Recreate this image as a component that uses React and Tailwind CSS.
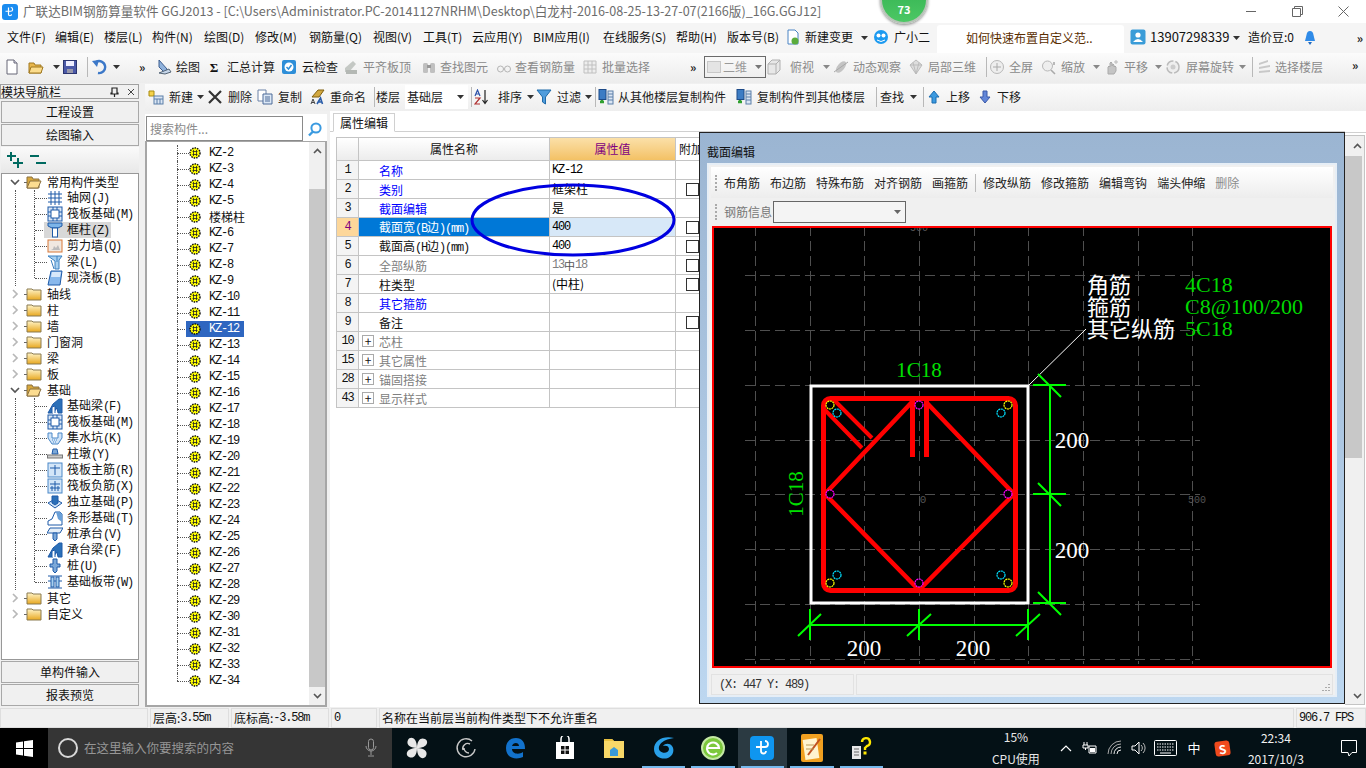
import React from "react";

const MONO = "font-['Liberation_Mono','Noto_Sans_CJK_SC',monospace] tracking-[-1.2px]";

const S = ({ children, c = "w-4 h-4 shrink-0", v = "0 0 16 16" }) => (
  <svg className={c} viewBox={v}>{children}</svg>
);
const Caret = ({ c = "#333" }) => (
  <svg className="w-[7px] h-[4px]" viewBox="0 0 7 4"><polygon points="0,0 7,0 3.5,4" fill={c} /></svg>
);
const CaretBox = ({ w, c }) => <div className={`${w} flex justify-center items-center shrink-0`}><Caret c={c} /></div>;
const More = () => <span className="text-[12px] font-bold leading-none -mt-1 text-[#222]">»</span>;
const Sep = ({ w }) => <div className={`${w} h-[20px] flex justify-center shrink-0`}><div className="w-px h-full bg-[#b8b8b8]" /></div>;

/* toolbar icons */
const IDoc = () => <S><path d="M3 1h7l3 3v11H3z" fill="#fff" stroke="#667" /><path d="M10 1v3h3" fill="#dde" stroke="#667" /></S>;
const IOpen = () => <S><path d="M1 4h5l1 2h6v8H1z" fill="#e8b64c" stroke="#a07820" /><path d="M3 8h12l-2 6H1z" fill="#fbdc8c" stroke="#a07820" /></S>;
const ISave = () => <S><rect x="1.5" y="1.5" width="13" height="13" fill="#4b59a8" stroke="#2b3570" /><rect x="4" y="2" width="8" height="5" fill="#eef" /><rect x="5" y="10" width="6" height="4" fill="#99a" /></S>;
const IUndo = () => <S><path d="M5 3 A6 6 0 1 1 7 14" fill="none" stroke="#3c78c8" strokeWidth="2.4" /><polygon points="1,2 8,1 6,8" fill="#3c78c8" /></S>;
const IDraw = () => <S><path d="M3 1l8 9-2 4-6-6z" fill="#8fb2dc" stroke="#3e5e90" /><path d="M3 14l10-4 2 3-6 2z" fill="#c6d6ea" stroke="#567" /></S>;
const ISum = () => <span className="w-4 text-center font-bold text-[13px] leading-none text-[#111] font-['Liberation_Serif',serif] shrink-0">Σ</span>;
const ICloud = () => <S><rect x="1" y="1" width="14" height="14" rx="2" fill="#2d8ed8" /><circle cx="8" cy="8" r="4.5" fill="#fff" /><path d="M5.5 8l2 2 3-4" fill="none" stroke="#2d8ed8" strokeWidth="1.5" /></S>;
const IGrayA = () => <S><path d="M2 9l8-7 3 3-7 8H2z" fill="#c4c8c4" /><rect x="3" y="11" width="11" height="4" fill="#b4b8b4" /></S>;
const IBinoc = () => <S><rect x="2" y="4" width="5" height="10" rx="1.5" fill="#c0c0c0" /><rect x="9" y="4" width="5" height="10" rx="1.5" fill="#c0c0c0" /><rect x="6" y="6" width="4" height="3" fill="#999" /></S>;
const IGlass = () => <S><circle cx="4.5" cy="10" r="3" fill="none" stroke="#b4b4b4" /><circle cx="11.5" cy="10" r="3" fill="none" stroke="#b4b4b4" /><path d="M7.5 10h1" stroke="#b4b4b4" /></S>;
const IBatch = () => <S><path d="M2 2h12v12H2z" fill="#eee" stroke="#c0c0c0" /><path d="M2 6h12M2 10h12M6 2v12M10 2v12" stroke="#c0c0c0" /></S>;
const ICube = () => <S><path d="M2 5l4-4h8v10l-4 4H2z" fill="#e8e8e8" stroke="#b0b0b0" /><path d="M2 5h8v10M10 5l4-4" fill="none" stroke="#b0b0b0" /></S>;
const IOrbit = () => <S><ellipse cx="8" cy="8" rx="3.5" ry="7" transform="rotate(40 8 8)" fill="#c4c4c4" /><path d="M1 13L15 3" stroke="#a8a8a8" /></S>;
const ILocal = () => <S><path d="M8 1l6 5-6 9-6-9z" fill="#ddd" stroke="#bbb" /><path d="M2 6h12M5 3.5l3 11.5M11 3.5L8 15" stroke="#bbb" fill="none" /></S>;
const IZoomFull = () => <S><circle cx="8" cy="8" r="6.5" fill="#eee" stroke="#b8b8b8" /><path d="M8 4v8M4 8h8" stroke="#aaa" /></S>;
const IZoom = () => <S><circle cx="6.5" cy="7" r="5" fill="#eee" stroke="#b8b8b8" /><path d="M10 11l4 4M13 3v3" stroke="#aaa" strokeWidth="1.6" /></S>;
const IPan = () => <S><path d="M4 15V8l1-1 1 1V4l1-1 1 1v3l1-2 1 1v2l1-1 1 1v4l-2 3z" fill="#c4c4c4" stroke="#aaa" /><path d="M12 1v4M10 3h4" stroke="#bbb" /></S>;
const IRotate = () => <S><circle cx="8" cy="8" r="6" fill="#eee" stroke="#bbb" strokeWidth="1.5" strokeDasharray="8 2" /><circle cx="8" cy="8" r="2.5" fill="#ccc" /></S>;
const ILayer = () => <S><path d="M3 4l9-3v2L3 6zM3 8l11-2v2L3 10zM3 12l11-1v2l-11 1z" fill="#c8c8c8" /></S>;
const INew = () => <S><path d="M1 2h5v5H1z" fill="#f5d24a" stroke="#a88b10" /><rect x="6" y="7" width="9" height="8" fill="#dbe6f4" stroke="#5b7fa8" /><path d="M6 10h9M9 10v5M12 10v5" stroke="#5b7fa8" /></S>;
const IX = () => <S><path d="M2 2l12 12M14 2L2 14" stroke="#333" strokeWidth="2.2" /></S>;
const ICopy = () => <S><path d="M1 1h8v11H1z" fill="#fff" stroke="#6a82a8" /><path d="M6 5h9v10H6z" fill="#dce8f6" stroke="#4c6a98" /><path d="M8 8h5M8 10h5M8 12h5" stroke="#4c6a98" /></S>;
const IRename = () => <S><path d="M2 8l6-7h6l-5 7z" fill="#d2a840" stroke="#806010" /><path d="M1 15l2-5 2 5M2 13.5h2" fill="none" stroke="#444" /><path d="M7 15l3.5-6 2 6M8.5 13h3.5" fill="none" stroke="#2a5ca8" strokeWidth="1.6" /></S>;
const ISort = () => <S><path d="M1 7l2.5-6L6 7M2 5h3" fill="none" stroke="#2b50a8" strokeWidth="1.2" /><path d="M1 9h5L1 15h5" fill="none" stroke="#b03030" strokeWidth="1.2" /><path d="M11 1v13M8.5 11l2.5 3.5L13.5 11" fill="none" stroke="#222" strokeWidth="1.2" /></S>;
const IFilter = () => <S><path d="M1 1h14L9.5 8v7l-3-2V8z" fill="#4f9cdc" stroke="#1f6aa8" /></S>;
const ICopyFrom = () => <S><rect x="1" y="0.5" width="7" height="10" fill="#3c7cc4" stroke="#1d4a88" /><rect x="10" y="2" width="5" height="13" fill="#dbe6f4" stroke="#5b7fa8" /><path d="M10 5h5M10 8h5M10 11h5" stroke="#5b7fa8" /><path d="M4 11v3M2 13h4" stroke="#30a030" strokeWidth="2.4" /></S>;
const IUp = () => <S><path d="M8 2l5 6h-3v6H6V8H3z" fill="#3c9ae0" stroke="#1b6cb0" /></S>;
const IDown = () => <S><path d="M8 14l5-6h-3V2H6v6H3z" fill="#6286d8" stroke="#3a58a8" /></S>;

const Tool = ({ w, icon, label, muted, gap = "gap-1" }) => (
  <div className={`${w} flex items-center ${gap} shrink-0 whitespace-nowrap ${muted ? "text-[#8a8a8a]" : "text-[#1a1a1a]"}`}>
    {icon}<span>{label}</span>
  </div>
);

function TitleBar() {
  return (
    <div className="h-[23px] bg-white flex items-center shrink-0 relative">
      <div className="ml-[2px] w-4 h-4 rounded-[3px] bg-[#1a8cf0] flex items-center justify-center shrink-0">
        <S c="w-3 h-3"><path d="M6 2v9a2 2 0 0 0 4 0M2 7h7a2.5 2.5 0 0 0 0-5" fill="none" stroke="#fff" strokeWidth="1.6" /></S>
      </div>
      <span className="ml-[5px] text-[#6c6c6c] text-[12.6px] whitespace-nowrap">{"广联达BIM钢筋算量软件 GGJ2013 - [C:\\Users\\Administrator.PC-20141127NRHM\\Desktop\\白龙村-2016-08-25-13-27-07(2166版)_16G.GGJ12]"}</span>
      <div className="ml-auto flex items-center">
        <div className="w-[46px] flex justify-center"><div className="w-[10px] h-px bg-[#666]" /></div>
        <div className="w-[46px] flex justify-center"><S c="w-[11px] h-[11px]" v="0 0 11 11"><path d="M0.5 2.5h8v8h-8zM2.5 2.5v-2h8v8h-2" fill="none" stroke="#666" /></S></div>
        <div className="w-[46px] flex justify-center"><S c="w-[11px] h-[11px]" v="0 0 11 11"><path d="M0.5 0.5l10 10M10.5 0.5l-10 10" stroke="#666" /></S></div>
      </div>
    </div>
  );
}

function MenuBar() {
  const items = [
    ["文件(F)", "w-[48px]"], ["编辑(E)", "w-[49px]"], ["楼层(L)", "w-[48px]"], ["构件(N)", "w-[52px]"], ["绘图(D)", "w-[51px]"],
    ["修改(M)", "w-[54px]"], ["钢筋量(Q)", "w-[64px]"], ["视图(V)", "w-[50px]"], ["工具(T)", "w-[49px]"], ["云应用(Y)", "w-[61px]"],
    ["BIM应用(I)", "w-[70px]"], ["在线服务(S)", "w-[73px]"], ["帮助(H)", "w-[51px]"], ["版本号(B)", "w-[59px]"],
  ];
  return (
    <div className="h-[30px] bg-[#f5f5f5] flex items-center pl-[7px] text-[12px] text-[#111] shrink-0 relative">
      {items.map(([t, w]) => <div key={t} className={`${w} whitespace-nowrap shrink-0 pb-[2px]`}>{t}</div>)}
      <div className="w-[72px] flex items-center gap-[4px] shrink-0 whitespace-nowrap -ml-[1px] pb-[2px]">
        <S><path d="M3 1h7l3 3v11H3z" fill="#fff" stroke="#4a84c4" /><circle cx="10" cy="12" r="3.5" fill="#5aac3c" /></S>新建变更
      </div>
      <CaretBox w="w-[14px]" />
      <div className="w-[64px] ml-[2px] flex items-center gap-[5px] shrink-0 whitespace-nowrap pb-[2px]">
        <S><circle cx="8" cy="8" r="7" fill="#1c9af0" /><circle cx="5.5" cy="6.5" r="2" fill="#fff" /><circle cx="10.5" cy="6.5" r="2" fill="#fff" /><path d="M4 11q4 3 8 0" fill="none" stroke="#fff" /></S>广小二
      </div>
      <div className="w-[187px] self-stretch mt-[2px] bg-white rounded-t-[3px] flex items-center pl-[29px] text-[#5a2e00] whitespace-nowrap shrink-0 pb-[3px]">如何快速布置自定义范..</div>
      <div className="w-[6px] shrink-0" />
      <div className="w-[101px] flex items-center gap-[4px] shrink-0 whitespace-nowrap pb-[2px]">
        <S><rect x="0.5" y="0.5" width="15" height="15" rx="2" fill="#3a9cd8" /><circle cx="8" cy="6" r="2.6" fill="#fff" /><path d="M3 13q5-6 10 0z" fill="#fff" /></S><span className="text-[13px]">13907298339</span>
      </div>
      <CaretBox w="w-[10px]" />
      <div className="w-[54px] shrink-0 ml-[7px] whitespace-nowrap pb-[2px]">造价豆:0</div>
      <S><path d="M8 1q3 0 3.5 4l1.5 6H3l1.5-6Q5 1 8 1z" fill="#2f8be8" /><path d="M6 12h4l-2 3z" fill="#1f6ac0" /></S>
      <div className="ml-auto mr-[3px]"><More /></div>
    </div>
  );
}

function Toolbar1() {
  return (
    <div className="h-[30px] pb-[2px] bg-gradient-to-b from-[#fbfbfb] to-[#ececec] flex items-center pl-[4px] text-[12px] shrink-0">
      <div className="w-[24px] shrink-0"><IDoc /></div>
      <div className="w-[21px] shrink-0"><IOpen /></div>
      <CaretBox w="w-[14px]" />
      <div className="w-[22px] shrink-0 ml-[-1px]"><ISave /></div>
      <Sep w="w-[7px]" />
      <div className="w-[21px] shrink-0"><IUndo /></div>
      <CaretBox w="w-[8px]" />
      <div className="w-[17px] shrink-0" />
      <div className="w-[19px] pl-[2px] shrink-0"><More /></div>
      <Tool w="w-[50px]" icon={<IDraw />} label="绘图" />
      <Tool w="w-[75px]" icon={<ISum />} label="汇总计算" gap="gap-[5px]" />
      <Tool w="w-[62px]" icon={<ICloud />} label="云检查" gap="gap-[5px]" />
      <Tool w="w-[78px]" icon={<IGrayA />} label="平齐板顶" muted />
      <Tool w="w-[75px]" icon={<IBinoc />} label="查找图元" muted gap="gap-[3px]" />
      <Tool w="w-[86px]" icon={<IGlass />} label="查看钢筋量" muted gap="gap-[3px]" />
      <Tool w="w-[105px]" icon={<IBatch />} label="批量选择" muted />
      <div className="w-[17px] pl-[3px] shrink-0"><More /></div>
      <div className="w-[62px] h-[22px] border border-[#6a6a6a] flex items-center pl-[2px] gap-[2px] text-[#999] shrink-0">
        <div className="w-[14px] h-[12px] bg-[#e4e4e4] border border-[#c8c8c8]" />二维
        <div className="ml-auto mr-[3px]"><Caret c="#777" /></div>
      </div>
      <Tool w="w-[53px]" icon={<ICube />} label="俯视" muted gap="gap-[8px]" />
      <CaretBox w="w-[14px]" c="#888" />
      <Tool w="w-[75px]" icon={<IOrbit />} label="动态观察" muted />
      <Tool w="w-[75px]" icon={<ILocal />} label="局部三维" muted />
      <Sep w="w-[6px]" />
      <Tool w="w-[52px]" icon={<IZoomFull />} label="全屏" muted />
      <Tool w="w-[48px]" icon={<IZoom />} label="缩放" muted />
      <CaretBox w="w-[15px]" c="#888" />
      <Tool w="w-[48px]" icon={<IPan />} label="平移" muted />
      <CaretBox w="w-[13px]" c="#888" />
      <Tool w="w-[71px]" icon={<IRotate />} label="屏幕旋转" muted gap="gap-[5px]" />
      <CaretBox w="w-[12px]" c="#888" />
      <Sep w="w-[8px]" />
      <Tool w="w-[96px]" icon={<ILayer />} label="选择楼层" muted gap="gap-[3px]" />
      <More />
    </div>
  );
}

function Toolbar2() {
  return (
    <div className="h-[27px] pb-[2px] mt-[1px] bg-gradient-to-b from-[#fbfbfb] to-[#eeeeee] flex items-center pl-[3px] text-[12px] shrink-0">
      <Tool w="w-[46px]" icon={<INew />} label="新建" gap="gap-[5px]" />
      <CaretBox w="w-[13px]" />
      <Tool w="w-[50px]" icon={<IX />} label="删除" gap="gap-[5px]" />
      <Tool w="w-[53px]" icon={<ICopy />} label="复制" gap="gap-[5px]" />
      <Tool w="w-[63px]" icon={<IRename />} label="重命名" />
      <Sep w="w-[3px]" />
      <div className="w-[29px] text-[#1a1a1a] shrink-0">楼层</div>
      <div className="w-[63px] h-[24px] bg-white flex items-center pl-[2px] text-[#1a1a1a] shrink-0">基础层<div className="ml-auto mr-[4px]"><Caret /></div></div>
      <Sep w="w-[6px]" />
      <Tool w="w-[50px]" icon={<ISort />} label="排序" gap="gap-[8px]" />
      <CaretBox w="w-[12px]" />
      <Tool w="w-[48px]" icon={<IFilter />} label="过滤" gap="gap-[5px]" />
      <CaretBox w="w-[9px]" />
      <Sep w="w-[5px]" />
      <Tool w="w-[138px]" icon={<ICopyFrom />} label="从其他楼层复制构件" />
      <Tool w="w-[137px]" icon={<ICopyFrom />} label="复制构件到其他楼层" gap="gap-[5px]" />
      <Sep w="w-[7px]" />
      <div className="w-[26px] text-[#1a1a1a] shrink-0">查找</div>
      <CaretBox w="w-[14px]" />
      <Sep w="w-[6px]" />
      <Tool w="w-[51px]" icon={<IUp />} label="上移" />
      <Tool w="w-[51px]" icon={<IDown />} label="下移" />
    </div>
  );
}

const NavBtn = ({ children }) => (
  <div className="h-[22px] mb-[1px] bg-[#f0f0f0] border border-[#a8a8a8] flex items-center justify-center text-[12px] text-[#111] shrink-0">{children}</div>
);

const FolderIcon = ({ open }) => open ? (
  <S><path d="M1 3h5l1 2h6v9H1z" fill="#d8a83c" stroke="#8a7040" /><path d="M4 7h11l-3 7H1z" fill="#fcdc90" stroke="#8a7040" /></S>
) : (
  <S><path d="M1 3h5l1 1h8v10H1z" fill="url(#fold)" stroke="#8a7a50" /></S>
);

/* component tree icons */
const B = "#1e5aa8";
const IGrid = () => <S><path d="M1 4h14M1 8h14M1 12h14M4 1v14M8 1v14M12 1v14" stroke={B} /></S>;
const IRaft = () => <S><rect x="1" y="1" width="14" height="14" fill="#dce8f6" stroke={B} /><rect x="4" y="4" width="8" height="8" fill="#fff" stroke={B} /><path d="M1 6h3M1 10h3M12 6h3M12 10h3M6 1v3M10 1v3M6 12v3M10 12v3" stroke={B} /></S>;
const IColumn = () => <S><path d="M1 1h14v3l-4 2H5L1 4z" fill="#7db4e8" stroke={B} /><rect x="5.5" y="6" width="5" height="9" fill="#fff" stroke={B} /></S>;
const IWall = () => <S><rect x="1" y="2" width="14" height="12" fill="#f0e8e0" stroke="#d87838" /><path d="M6 11l1-3 2 2 2-3 2 5H4z" fill="#bbb" /></S>;
const IBeam = () => <S><path d="M1 2h14l-3 4v9H8V7z" fill="#a8d0f0" stroke="#3a80c0" /><path d="M4 6l3 9M10 2v6" stroke="#3a80c0" /></S>;
const ISlab = () => <S><path d="M4 1h11l-2 14H1z" fill="#88b8ec" stroke={B} /><path d="M5 2h9l-1 5H4z" fill="#d8e8fa" /></S>;
const IFBeam = () => <S><path d="M1 15l5-9 6-5h3v14h-4l-1-5-4 5z" fill="#2c70b8" stroke={B} /><path d="M5 15V9l3-1v7" fill="#fff" stroke={B} /></S>;
const IPit = () => <S><path d="M1 3h4v5h6V3h4v5l-4 6H5L1 8z" fill="#d0e4f8" stroke="#4a88c8" /><path d="M5 10h6M6 12h4" stroke="#4a88c8" strokeDasharray="1 1" /></S>;
const IPier = () => <S><path d="M6 3h4l1 5H5z" fill="#7ca8d8" stroke={B} /><rect x="0.5" y="9" width="15" height="3" fill="#ccc" stroke="#777" /></S>;
const IMain = ({ bar }) => <S><rect x="1" y="1" width="14" height="14" fill="#d4e6f8" stroke="#4a88c8" /><path d="M8 3v10M3 6h10" stroke={B} />{bar && <path d="M3 10h10M5 8v5M11 8v5" stroke={B} />}</S>;
const IIso = () => <S><path d="M1 9l7-4 7 4-7 5z" fill="#d4e6f8" stroke={B} /><path d="M5 2h6v7l-3 2-3-2z" fill="#2c70b8" stroke={B} /></S>;
const IStrip = () => <S><path d="M5 9l3-7h5l2 2v11H1v-4z" fill="#fff" stroke={B} /><path d="M9 2l4 0 2 2v8l-4-3z" fill="#6aa0d8" /></S>;
const ICap = () => <S><path d="M3 2h13l-3 5H0z" fill="#e4eef8" stroke={B} /><path d="M6 7h4v6l-2 2-2-2z" fill="#7ca8d8" stroke={B} /></S>;
const IPile = () => <S><path d="M6 1h4v5h3v3h-3v4l-2 2-2-2V9H3V6h3z" fill="#7ca8d8" stroke={B} /></S>;
const IBand = () => <S><path d="M1 2h14M1 14h14M1 7h14" stroke={B} /><rect x="4" y="3" width="3" height="10" fill="#a8d0f0" stroke={B} /><rect x="9" y="3" width="3" height="10" fill="#a8d0f0" stroke={B} /></S>;

const Chevron = ({ open }) => open ? (
  <S c="w-[10px] h-[10px] shrink-0" v="0 0 10 10"><path d="M1 3l4 4 4-4" fill="none" stroke="#555" strokeWidth="1.7" /></S>
) : (
  <S c="w-[10px] h-[10px] shrink-0" v="0 0 10 10"><path d="M3 1l4 4-4 4" fill="none" stroke="#b8b8b8" strokeWidth="1.7" /></S>
);

const TreeFolder = ({ name, open }) => (
  <div className="h-4 flex items-center shrink-0">
    <div className="w-[10px] ml-[8px] mr-[4px]"><Chevron open={open} /></div>
    <div className="w-[2px] border-t border-dotted border-[#666]" />
    <FolderIcon open={open} />
    <span className="ml-[5px] whitespace-nowrap">{name}</span>
  </div>
);

const Child = ({ icon, name, suf, sel, last }) => (
  <div className="h-4 flex items-center shrink-0 relative">
    <div className="w-[19px] ml-[13px] h-full border-l border-dotted border-[#555] shrink-0" />
    <div className={`w-0 border-l border-dotted border-[#555] shrink-0 ${last ? "h-2 self-start" : "h-full"}`} />
    <div className="w-[12px] border-t border-dotted border-[#555] shrink-0" />
    <div className={`flex items-center h-full whitespace-nowrap ${sel ? "bg-[#d8d8d8] pr-[2px]" : ""} -ml-[3px] pl-[3px]`}>
      {icon}
      <span className="ml-[4px]">{name}<span className={MONO}>{suf}</span></span>
    </div>
  </div>
);

function LeftNav() {
  const a = [
    [<IGrid />, "轴网", "(J)"], [<IRaft />, "筏板基础", "(M)"], [<IColumn />, "框柱", "(Z)", 1], [<IWall />, "剪力墙", "(Q)"], [<IBeam />, "梁", "(L)"], [<ISlab />, "现浇板", "(B)"],
  ];
  const b = [
    [<IFBeam />, "基础梁", "(F)"], [<IRaft />, "筏板基础", "(M)"], [<IPit />, "集水坑", "(K)"], [<IPier />, "柱墩", "(Y)"], [<IMain />, "筏板主筋", "(R)"], [<IMain bar />, "筏板负筋", "(X)"],
    [<IIso />, "独立基础", "(P)"], [<IStrip />, "条形基础", "(T)"], [<ICap />, "桩承台", "(V)"], [<IFBeam />, "承台梁", "(F)"], [<IPile />, "桩", "(U)"], [<IBand />, "基础板带", "(W)"],
  ];
  const render = (arr) => arr.map((r, i) => <Child key={i} icon={r[0]} name={r[1]} suf={r[2]} sel={r[3]} last={i === arr.length - 1} />);
  return (
    <div className="w-[140px] pl-[1px] pr-[1px] flex flex-col shrink-0">
      <svg className="w-0 h-0 absolute"><defs><linearGradient id="fold" x1="0" y1="0" x2="0" y2="1"><stop offset="0" stopColor="#fff4c8" /><stop offset="1" stopColor="#e8a820" /></linearGradient></defs></svg>
      <div className="h-[15px] mt-[1px] mb-[2px] border border-[#a0a0a0] bg-[#f0f0f0] flex items-center text-[12px] text-[#111] shrink-0 -ml-[1px]">
        <span className="flex-1 whitespace-nowrap">模块导航栏</span>
        <S c="w-[9px] h-[10px] mr-[8px]" v="0 0 9 10"><path d="M2 1h5v5h1v1H1V6h1zM4.5 7v3" fill="none" stroke="#222" strokeWidth="1.2" /></S>
        <S c="w-[8px] h-[8px] mr-[3px]" v="0 0 8 8"><path d="M1 1l6 6M7 1L1 7" stroke="#444" /></S>
      </div>
      <NavBtn>工程设置</NavBtn>
      <NavBtn>绘图输入</NavBtn>
      <div className="h-[26px] bg-gradient-to-b from-[#fafafa] to-[#e8e8e8] flex items-center pl-[6px] gap-[7px] shrink-0">
        <S c="w-[16px] h-[16px]" v="0 0 16 16"><path d="M4 0v9M0 4h9M11 6v10M6 11h10" stroke="#006a60" strokeWidth="2" /></S>
        <S c="w-[16px] h-[16px]" v="0 0 16 16"><path d="M0 4h9M6 11h10" stroke="#006a60" strokeWidth="2" /></S>
      </div>
      <div className="flex-1 bg-white border border-[#989898] text-[12px] text-[#111] flex flex-col overflow-hidden">
        <TreeFolder name="常用构件类型" open />
        {render(a)}
        {["轴线", "柱", "墙", "门窗洞", "梁", "板"].map((n) => <TreeFolder key={n} name={n} />)}
        <TreeFolder name="基础" open />
        {render(b)}
        <TreeFolder name="其它" />
        <TreeFolder name="自定义" />
      </div>
      <div className="mt-[1px]"><NavBtn>单构件输入</NavBtn></div>
      <NavBtn>报表预览</NavBtn>
    </div>
  );
}

const Gear = () => (
  <S c="w-[12px] h-[12px] shrink-0" v="0 0 12 12">
    <circle cx="6" cy="6" r="5" fill="#ffff00" stroke="#111" strokeWidth="1.5" strokeDasharray="1.5 1" />
    <path d="M3.5 4.5h5M3.5 7.5h5M4.5 3v6M7.5 3v6" stroke="#222" strokeWidth="0.8" />
  </S>
);

function CompList() {
  const names = ["KZ-2", "KZ-3", "KZ-4", "KZ-5", "楼梯柱"];
  for (let i = 6; i <= 34; i++) names.push("KZ-" + i);
  return (
    <div className="w-[182px] ml-[5px] flex flex-col shrink-0 mt-[3px]">
      <div className="h-[27px] bg-white flex items-center shrink-0 pt-[2px]">
        <div className="w-[157px] h-[25px] ml-[1px] border border-[#8a8a8a] flex items-center pl-[3px] text-[12px] text-[#8a8a8a] shrink-0">搜索构件...</div>
        <div className="flex-1 flex justify-center">
          <S><circle cx="9" cy="7" r="4.6" fill="#fff" stroke="#3a9ae0" strokeWidth="2" /><path d="M6 10.5L2 14.5" stroke="#3a9ae0" strokeWidth="2.4" /></S>
        </div>
      </div>
      <div className="flex-1 bg-white border-x-2 border-b-2 border-t border-[#a6a6a6] flex min-h-0">
        <div className="flex-1 pt-[3px] pl-[30px] text-[12px] text-[#111] overflow-hidden">
          {names.map((n, i) => (
            <div key={n} className="h-4 flex items-center relative">
              <div className={`absolute left-0 top-0 border-l border-dotted border-[#555] ${i === names.length - 1 ? "h-2" : "h-4"}`} />
              <div className="w-[12px] border-t border-dotted border-[#555] shrink-0" />
              <div className={`flex items-center h-full ${n === "KZ-12" ? "bg-[#2e66c0] text-white" : ""} -ml-[3px] pl-[3px] pr-[5px]`}>
                <Gear />
                <span className={`ml-[8px] ${n.startsWith("KZ") ? MONO : ""}`}>{n}</span>
              </div>
            </div>
          ))}
        </div>
        <Scroll w="w-[16px]" top="h-[47px]" bottom="h-[18px]" />
      </div>
    </div>
  );
}

const Up = () => <S c="w-[9px] h-[6px]" v="0 0 9 6"><path d="M1 5l3.5-3.5L8 5" fill="none" stroke="#555" strokeWidth="1.6" /></S>;
const Down = () => <S c="w-[9px] h-[6px]" v="0 0 9 6"><path d="M1 1l3.5 3.5L8 1" fill="none" stroke="#555" strokeWidth="1.6" /></S>;

function Scroll({ w, top, bottom }) {
  return (
    <div className={`${w} flex flex-col bg-[#f0f0f0] shrink-0`}>
      <div className={`${top} flex justify-center pt-[6px]`}><Up /></div>
      <div className="flex-1 bg-[#c8c8c8]" />
      <div className={`${bottom} flex justify-center items-center`}><Down /></div>
    </div>
  );
}

const Check = () => <div className="w-[13px] h-[13px] border border-[#333] bg-white" />;

function PropRow({ n, name, val, color = "text-[#111]", check, plus, sel }) {
  return (
    <div className="h-[19px] flex border-b border-[#c4c4c4] text-[12px] shrink-0">
      <div className={`w-[22px] border-r border-[#c4c4c4] flex items-center justify-center shrink-0 ${MONO} ${sel ? "bg-[#fdd79a] text-[#800080]" : "bg-[#f4f4f4] text-[#111]"}`}>{n}</div>
      <div className={`w-[191px] border-r border-[#c4c4c4] flex items-center shrink-0 pl-[3px] ${sel ? "bg-[#0078d7] text-white" : color}`}>
        {plus ? <div className="w-[12px] h-[12px] border border-[#aaa] flex items-center justify-center text-[#111] text-[12px] leading-none shrink-0">+</div> : <div className="w-[12px] shrink-0" />}
        <span className="ml-[5px] pt-[2px] whitespace-nowrap">{name}</span>
      </div>
      <div className={`w-[126px] border-r border-[#c4c4c4] flex items-center pl-[2px] whitespace-nowrap shrink-0 ${sel ? "bg-[#d7e8f8]" : ""}`}>{val}</div>
      <div className="w-[24px] flex items-center justify-end pr-[1px] shrink-0">{check && <Check />}</div>
    </div>
  );
}

function PropPanel() {
  const g = "text-[#808080]", bl = "text-[#0000ff]";
  return (
    <div className="flex-1 ml-[3px] bg-white flex flex-col min-w-0 pt-[2px]">
      <div className="h-[19px] border-b border-[#d0d0d0] flex shrink-0 pl-[3px]">
        <div className="w-[62px] h-[19px] border border-[#d0d0d0] border-b-white bg-white text-[12px] text-[#111] flex items-center pl-[6px] whitespace-nowrap">属性编辑</div>
      </div>
      <div className="w-[363px] ml-[6px] mt-[5px] border-t border-l border-[#c4c4c4] flex flex-col">
        <div className="h-[23px] flex border-b border-[#c4c4c4] text-[12px] shrink-0">
          <div className="w-[22px] border-r border-[#c4c4c4] bg-gradient-to-b from-white to-[#ececec] shrink-0" />
          <div className="w-[191px] border-r border-[#c4c4c4] bg-gradient-to-b from-white to-[#ececec] flex items-center justify-center text-[#111] shrink-0">属性名称</div>
          <div className="w-[126px] border-r border-[#c4c4c4] bg-gradient-to-b from-[#fbe0a8] to-[#f3c164] flex items-center justify-center text-[#800080] shrink-0">属性值</div>
          <div className="w-[24px] bg-white flex items-center pl-[3px] whitespace-nowrap text-[#111] shrink-0">附加</div>
        </div>
        <PropRow n="1" name="名称" val={<span className={MONO}>KZ-12</span>} color={bl} />
        <PropRow n="2" name="类别" val="框架柱" color={bl} check />
        <PropRow n="3" name="截面编辑" val="是" color={bl} />
        <PropRow n="4" name={<>截面宽<span className={MONO}>(B</span>边<span className={MONO}>)(mm)</span></>} val={<span className={MONO}>400</span>} sel check />
        <PropRow n="5" name={<>截面高<span className={MONO}>(H</span>边<span className={MONO}>)(mm)</span></>} val={<span className={MONO}>400</span>} check />
        <PropRow n="6" name="全部纵筋" val={<span className="text-[#808080] flex items-center"><span className={MONO}>13</span><span className="text-[11px] text-[#555]">中</span><span className={MONO}>18</span></span>} color={g} check />
        <PropRow n="7" name="柱类型" val="(中柱)" check />
        <PropRow n="8" name="其它箍筋" color={bl} />
        <PropRow n="9" name="备注" check />
        <PropRow n="10" name="芯柱" color={g} plus />
        <PropRow n="15" name="其它属性" color={g} plus />
        <PropRow n="28" name="锚固搭接" color={g} plus />
        <PropRow n="43" name="显示样式" color={g} plus />
      </div>
    </div>
  );
}

function RightScroll() {
  return (
    <div className="w-[21px] bg-white shrink-0 pt-[21px] flex flex-col">
      <div className="flex-1 border-t border-[#d0d0d0] pt-[2px] pb-[2px] pr-[5px] flex min-h-0">
        <div className="flex-1 border-y border-r border-[#c4c4c4] bg-[#f0f0f0] flex flex-col pr-[2px]">
          <div className="h-[20px] flex items-center justify-center shrink-0 bg-[#f0f0f0] pl-[8px]"><Up /></div>
          <div className="h-[302px] bg-[#c8c8c8] shrink-0" />
          <div className="mt-auto h-[16px] flex items-center justify-center pl-[8px]"><Down /></div>
        </div>
      </div>
    </div>
  );
}

function Canvas() {
  const vx = [755, 810, 864, 919, 974, 1028, 1083, 1138, 1192];
  const hy = [275, 330, 385, 440, 494, 549, 604, 659];
  const G = "#00ff00", R = "#ff0000";
  const serif = "Liberation Serif, Noto Sans CJK SC, serif";
  const cjk = "Noto Sans CJK SC, sans-serif";
  const bar = (x, y, c) => <circle key={c + x + y} cx={x} cy={y} r="4" fill="#000" stroke={c} strokeWidth="1.2" strokeDasharray="2 0.6" />;
  return (
    <svg className="w-full h-full block" viewBox="714 228 616 438">
      <rect x="700" y="220" width="660" height="460" fill="#000" />
      <g stroke="#4f4f4f" strokeWidth="1" strokeDasharray="10 5" fill="none">
        {vx.map((x) => <path key={x} d={`M${x + 0.5} 226V664`} />)}
        {hy.map((y) => <path key={y} d={`M745 ${y + 0.5}H1200`} />)}
      </g>
      <text x="919" y="231" fill="#555" fontSize="10" textAnchor="middle" fontFamily="Liberation Mono">500</text>
      <text x="1197" y="503" fill="#555" fontSize="10" textAnchor="middle" fontFamily="Liberation Mono">500</text>
      <text x="923" y="503" fill="#555" fontSize="11" textAnchor="middle" fontFamily="Liberation Mono">0</text>

      <path d="M1029 385L1086 329" stroke="#fff" strokeWidth="1" />
      <rect x="811" y="386" width="217" height="217" fill="none" stroke="#fff" strokeWidth="3" />

      <rect x="823.5" y="398.5" width="192" height="192" rx="7" fill="none" stroke={R} strokeWidth="5" />
      <path d="M912 402L825 494L919 590L1014 494L926 402" fill="none" stroke={R} strokeWidth="4.5" />
      <path d="M912.5 398V457M926.5 398V457" stroke={R} strokeWidth="5" />
      <path d="M825 410L862 448M833 399L872 438" stroke={R} strokeWidth="4" />

      {[[830, 405], [1008, 405], [830, 583], [1008, 583]].map(([x, y]) => bar(x, y, "#ffff00"))}
      {[[837, 413], [1001, 413], [837, 575], [1001, 575]].map(([x, y]) => bar(x, y, "#00e0ff"))}
      {[[919, 405], [830, 494], [1008, 494], [919, 583]].map(([x, y]) => bar(x, y, "#ff00ff"))}

      <g stroke={G} strokeWidth="2" fill="none">
        <path d="M810 625H1028M810 609V640M919 609V640M1028 609V640" />
        <path d="M798 636L821 614M907 636L931 614M1016 636L1040 614" />
        <path d="M1050 385V603M1033 385H1066M1033 494H1066M1033 603H1066" />
        <path d="M1038 374L1061 397M1038 483L1061 506M1038 592L1061 615" />
      </g>

      <g fill="#fff" fontFamily={serif} fontSize="23" textAnchor="middle">
        <text x="864" y="656">200</text>
        <text x="973" y="656">200</text>
        <text x="1072" y="448">200</text>
        <text x="1072" y="558">200</text>
      </g>
      <text x="919" y="377" fill="#00e000" fontFamily={serif} fontSize="21" textAnchor="middle">1C18</text>
      <text x="0" y="0" fill="#00e000" fontFamily={serif} fontSize="21" textAnchor="middle" transform="translate(803 494) rotate(-90)">1C18</text>

      <g fill="#fff" fontFamily={cjk} fontSize="22">
        <text x="1087" y="293">角筋</text>
        <text x="1087" y="315">箍筋</text>
        <text x="1087" y="337">其它纵筋</text>
      </g>
      <g fill="#00d800" fontFamily={serif} fontSize="22">
        <text x="1185" y="292">4C18</text>
        <text x="1185" y="314">C8@100/200</text>
        <text x="1185" y="336">5C18</text>
      </g>
    </svg>
  );
}

function Dialog() {
  const tools = ["布角筋", "布边筋", "特殊布筋", "对齐钢筋", "画箍筋"];
  const tools2 = ["修改纵筋", "修改箍筋", "编辑弯钩", "端头伸缩"];
  return (
    <div className="absolute left-[699px] top-[132px] w-[646px] h-[572px] border border-[#222] bg-gradient-to-b from-[#9bb5d2] to-[#bdd7f0] flex flex-col">
      <div className="h-[30px] shrink-0 flex items-center pl-[7px] pt-[7px] text-[12px] text-[#111]">截面编辑</div>
      <div className="flex-1 mx-[7px] mb-[6px] bg-[#f0f0f0] border-2 border-[#e6eef6] flex flex-col min-h-0">
        <div className="h-[31px] mx-[2px] mt-[2px] bg-gradient-to-b from-white to-[#ededed] flex items-center text-[12px] text-[#222] shrink-0 pl-[4px]">
          <div className="h-[16px] border-l-2 border-dotted border-[#aaa] mr-[7px]" />
          <div className="flex gap-[10px] whitespace-nowrap">
            {tools.map((t) => <span key={t}>{t}</span>)}
          </div>
          <div className="w-px h-[18px] bg-[#bbb] mx-[7px]" />
          <div className="flex gap-[10px] whitespace-nowrap">
            {tools2.map((t) => <span key={t}>{t}</span>)}
            <span className="text-[#8c8c8c]">删除</span>
          </div>
        </div>
        <div className="h-[28px] mx-[2px] flex items-center text-[12px] text-[#777] shrink-0 pl-[4px]">
          <div className="h-[16px] border-l-2 border-dotted border-[#aaa] mr-[7px]" />
          <span className="whitespace-nowrap">钢筋信息</span>
          <div className="w-[133px] h-[22px] ml-[1px] border border-[#666] bg-[#f4f4f4] flex items-center justify-end pr-[4px]"><Caret c="#666" /></div>
        </div>
        <div className="h-[442px] mx-[3px] border-2 border-[#ff0000] bg-black shrink-0 overflow-hidden"><Canvas /></div>
        <div className="h-[6px] shrink-0" />
        <div className="flex-1 flex mx-[2px] gap-[2px] min-h-0">
          <div className="w-[143px] border border-[#e2e2e2] flex items-center pl-[7px] text-[12px] text-[#333] whitespace-nowrap"><span className={MONO}>(X: 447 Y: 489)</span></div>
          <div className="flex-1 border border-[#e2e2e2] flex items-end justify-end pr-[1px] pb-[1px]">
            <S c="w-[10px] h-[10px]" v="0 0 10 10"><path d="M8 1v1M5 4v1M8 4v1M2 7v1M5 7v1M8 7v1" stroke="#aaa" strokeWidth="2" /></S>
          </div>
        </div>
      </div>
    </div>
  );
}

function StatusBar() {
  const c = "h-full border border-[#dedede] flex items-center pl-[2px] whitespace-nowrap shrink-0";
  return (
    <div className="h-[21px] bg-[#f0f0f0] flex text-[12px] text-[#111] gap-[2px] pt-[1px] shrink-0">
      <div className={`${c} w-[148px]`} />
      <div className={`${c} w-[79px]`}>层高:<span className={MONO}>3.55m</span></div>
      <div className={`${c} w-[98px]`}>底标高:<span className={MONO}>-3.58m</span></div>
      <div className={`${c} w-[46px]`}><span className={MONO}>0</span></div>
      <div className={`${c} flex-1 !shrink`}>名称在当前层当前构件类型下不允许重名</div>
      <div className={`${c} w-[70px]`}><span className={MONO}>906.7 FPS</span></div>
    </div>
  );
}

const TaskIcons = [
  <S c="w-8 h-8" v="0 0 32 32"><path d="M16 16C8 16 5 12 7 8s9-3 9 8zM16 16c0-8 4-11 8-9s3 9-8 9zM16 16c8 0 11 4 9 8s-9 3-9-8zM16 16c0 8-4 11-8 9s-3-9 8-9z" fill="#e8e8e8" /></S>,
  <S c="w-6 h-6" v="0 0 24 24"><path d="M18 5A9 9 0 1 0 21 13M9 14a5 5 0 0 1 7-6M15 17a5 5 0 0 1-5-5" fill="none" stroke="#c8c8c8" strokeWidth="1.4" /></S>,
  <S c="w-6 h-6" v="0 0 24 24"><path d="M3 12C3 5 8 2 13 2c6 0 9 4 9 11H9c0 5 7 6 11 3v5c-6 3-17 2-17-9zM9 10h7c0-4-6-4-7 0z" fill="#1272cc" /></S>,
  <S c="w-6 h-6" v="0 0 24 24"><path d="M3 6h18v17H3z" fill="#fff" /><path d="M8 6V3a4 4 0 0 1 8 0v3" fill="none" stroke="#fff" strokeWidth="1.5" /><path d="M8 10h3.5v3.5H8zM12.5 10H16v3.5h-3.5zM8 14.5h3.5V18H8zM12.5 14.5H16V18h-3.5z" fill="#111" /></S>,
  <S c="w-6 h-6" v="0 0 24 24"><path d="M2 3h8l2 2h10v17H2z" fill="#f8d868" /><path d="M2 3h8l2 2H2z" fill="#e8c040" /><path d="M8 14l4-3 4 3v6H8z" fill="#3a9ad8" /></S>,
  <S c="w-7 h-7" v="0 0 28 28"><path d="M24 4C14 1 4 6 4 15c0 8 8 11 14 9 5-2 7-8 4-12-2-3-7-3-9 0 3-1 6 0 6 3 0 4-6 5-9 2-3-4 0-11 14-13z" fill="#2aa0e8" /></S>,
  <S c="w-[26px] h-[26px]" v="0 0 26 26"><circle cx="13" cy="13" r="11" fill="#7cc83c" stroke="#c4e8a4" strokeWidth="2" /><path d="M7 13h12a6 6 0 1 0-2 5" fill="none" stroke="#fff" strokeWidth="2.2" /></S>,
  <div className="w-6 h-6 rounded-[4px] bg-[#0f96f0] flex items-center justify-center"><S c="w-[18px] h-[18px]" v="0 0 18 18"><path d="M8 2v10a2.5 2.5 0 0 0 5 0M3 8h9a3 3 0 0 0 0-6" fill="none" stroke="#fff" strokeWidth="1.8" /></S></div>,
  <S c="w-6 h-[30px]" v="0 0 24 30"><rect x="1" y="1" width="22" height="28" rx="2" fill="#f0a020" /><rect x="4" y="6" width="14" height="20" fill="#fff4d0" transform="rotate(-8 11 16)" /><path d="M8 22L20 6" stroke="#c05020" strokeWidth="2" /><path d="M6 12h8M6 16h8" stroke="#b89858" /></S>,
  <S c="w-6 h-6" v="0 0 24 24"><rect x="3" y="10" width="9" height="13" fill="#e8e8e8" /><path d="M5 13h5M5 16h5M5 19h5" stroke="#666" /><path d="M13 6a4 4 0 1 1 5 4l-2 2v2" fill="none" stroke="#ffe800" strokeWidth="2.4" /><rect x="14.5" y="15.5" width="3" height="3" fill="#ffe800" /></S>,
];

function Taskbar() {
  return (
    <div className="h-[40px] bg-[#041116] flex items-stretch text-white shrink-0">
      <div className="w-[48px] bg-black flex items-center justify-center shrink-0">
        <S c="w-[17px] h-[17px]" v="0 0 17 17"><path d="M0 2.4L7 1.4V8H0zM8 1.3L17 0v8H8zM0 9h7v6.6L0 14.6zM8 9h9v8l-9-1.3z" fill="#fff" /></S>
      </div>
      <div className="w-[344px] bg-[#353535] flex items-center shrink-0 pl-[10px]">
        <div className="w-[20px] h-[20px] rounded-full border-[2.5px] border-[#d8d8d8] shrink-0" />
        <span className="ml-[6px] text-[12.5px] text-[#969696] whitespace-nowrap">在这里输入你要搜索的内容</span>
        <S c="w-[14px] h-[20px] ml-auto mr-[14px]" v="0 0 14 20"><rect x="4.5" y="1" width="5" height="11" rx="2.5" fill="none" stroke="#999" /><path d="M2 8a5 5 0 0 0 10 0M7 13v4M4 18h6" fill="none" stroke="#999" /></S>
      </div>
      <div className="flex shrink-0">
        {TaskIcons.map((ic, i) => (
          <div key={i} className={`w-[49.4px] relative flex items-center justify-center ${i === 7 ? "bg-[#2b3a42]" : ""}`}>
            {ic}
            {i >= 5 && <div className="absolute bottom-0 left-[3px] right-[3px] h-[2px] bg-[#76b9ed]" />}
          </div>
        ))}
      </div>
      <div className="w-[105px] shrink-0" />
      <div className="w-[50px] flex flex-col items-center justify-center text-[12px] leading-[22px] shrink-0 text-[#e8e8e8] whitespace-nowrap">
        <span>15%</span><span>CPU使用</span>
      </div>
      <div className="w-[14px] shrink-0" />
      <div className="flex items-center shrink-0">
        <div className="w-[22px] flex justify-center"><S c="w-[12px] h-[7px]" v="0 0 12 7"><path d="M1 6l5-5 5 5" fill="none" stroke="#fff" strokeWidth="1.2" /></S></div>
        <div className="w-[26px] flex justify-center"><S><path d="M2 2v3M5 2v3M1 5h5v3H1zM3.5 8v2M7 6h7v7H7z" fill="none" stroke="#fff" /><rect x="8" y="8" width="5" height="4" fill="#fff" /></S></div>
        <div className="w-[25px] flex justify-center"><S><path d="M1 14a13 13 0 0 1 13-13M4 14a10 10 0 0 1 10-10" fill="none" stroke="#aaa" /><path d="M7 14a7 7 0 0 1 7-7M10 14a4 4 0 0 1 4-4" fill="none" stroke="#eee" /></S></div>
        <div className="w-[20px] flex justify-center"><S><path d="M2 6h3l4-4v12l-4-4H2z" fill="none" stroke="#fff" /><path d="M11 5a4 4 0 0 1 0 6M13 3a7 7 0 0 1 0 10" fill="none" stroke="#bbb" /></S></div>
        <div className="w-[36px] flex justify-center"><S c="w-[23px] h-[16px]" v="0 0 23 16"><rect x="0.5" y="0.5" width="22" height="15" rx="1" fill="none" stroke="#fff" /><path d="M3 4h17M3 7h17M3 10h17" stroke="#fff" strokeDasharray="1.5 1" /><path d="M6 13h11" stroke="#fff" /></S></div>
        <div className="w-[20px] text-center text-[13px]">中</div>
        <div className="w-[38px] flex justify-center">
          <div className="w-[15px] h-[15px] rotate-[-8deg] rounded-[3px] bg-[#f04a1c] flex items-center justify-center text-[12px] font-bold leading-none">S</div>
        </div>
      </div>
      <div className="w-[64px] flex flex-col items-center justify-center text-[12px] leading-[21px] shrink-0 whitespace-nowrap text-[#f0f0f0] ml-[2px]">
        <span>22:34</span><span>2017/10/3</span>
      </div>
      <div className="flex-1 flex items-center justify-center pl-[24px]">
        <S c="w-[16px] h-[17px]" v="0 0 16 17"><path d="M0.5 0.5h15v12H11l-3 3.5-1-3.5H0.5z" fill="none" stroke="#fff" /></S>
      </div>
    </div>
  );
}

export default function App() {
  return (
    <div className="w-[1366px] h-[768px] relative overflow-hidden flex flex-col bg-[#f0f0f0] font-['Noto_Sans_CJK_SC','Liberation_Sans',sans-serif] text-[12px]">
      <TitleBar />
      <MenuBar />
      <Toolbar1 />
      <div className="flex-1 flex min-h-0">
        <LeftNav />
        <div className="flex-1 flex flex-col min-w-0 pl-[5px]">
          <Toolbar2 />
          <div className="flex-1 flex min-h-0 -ml-[5px]">
            <CompList />
            <PropPanel />
            <RightScroll />
          </div>
        </div>
      </div>
      <StatusBar />
      <Taskbar />

      <svg className="absolute left-[470px] top-[183px] w-[206px] h-[74px]" viewBox="0 0 206 74">
        <ellipse cx="103" cy="37" rx="101" ry="35" fill="none" stroke="#0000e0" strokeWidth="3" />
      </svg>
      <Dialog />
      <div className="absolute left-[880px] top-[-24px] w-[48px] h-[48px] rounded-full bg-gradient-to-b from-[#2fae4e] to-[#4cc864] border-2 border-[#b8c4b8] shadow-[0_1px_3px_#888] flex items-end justify-center pb-[7px] text-white font-bold text-[11px] leading-[12px]">73</div>
    </div>
  );
}
